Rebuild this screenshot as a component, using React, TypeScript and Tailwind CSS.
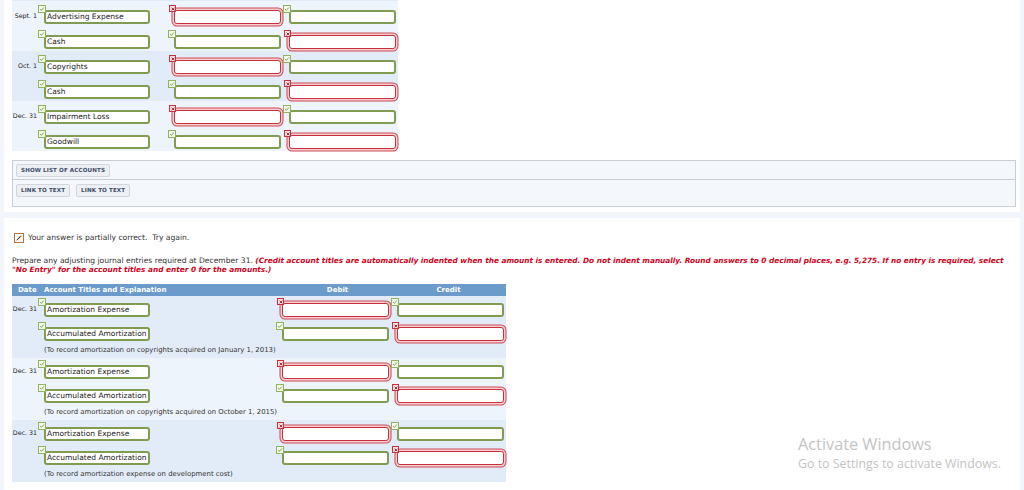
import React from "react"

type Entry = {
  date?: string
  account: string
  debitOk: boolean
  creditOk: boolean
}

type Group = {
  rows: Entry[]
  note?: string
}

const topGroups: Group[] = [
  {
    rows: [
      { date: "Sept. 1", account: "Advertising Expense", debitOk: false, creditOk: true },
      { account: "Cash", debitOk: true, creditOk: false },
    ],
  },
  {
    rows: [
      { date: "Oct. 1", account: "Copyrights", debitOk: false, creditOk: true },
      { account: "Cash", debitOk: true, creditOk: false },
    ],
  },
  {
    rows: [
      { date: "Dec. 31", account: "Impairment Loss", debitOk: false, creditOk: true },
      { account: "Goodwill", debitOk: true, creditOk: false },
    ],
  },
]

const adjustGroups: Group[] = [
  {
    rows: [
      { date: "Dec. 31", account: "Amortization Expense", debitOk: false, creditOk: true },
      { account: "Accumulated Amortization", debitOk: true, creditOk: false },
    ],
    note: "(To record amortization on copyrights acquired on January 1, 2013)",
  },
  {
    rows: [
      { date: "Dec. 31", account: "Amortization Expense", debitOk: false, creditOk: true },
      { account: "Accumulated Amortization", debitOk: true, creditOk: false },
    ],
    note: "(To record amortization on copyrights acquired on October 1, 2015)",
  },
  {
    rows: [
      { date: "Dec. 31", account: "Amortization Expense", debitOk: false, creditOk: true },
      { account: "Accumulated Amortization", debitOk: true, creditOk: false },
    ],
    note: "(To record amortization expense on development cost)",
  },
]

function OkMark() {
  return (
    <span className="absolute -left-[6px] -top-[5px] z-10 flex h-[8px] w-[8px] items-center justify-center border border-[#8fb35e] bg-[#f4f9ec]">
      <svg viewBox="0 0 8 8" className="h-[6px] w-[6px]">
        <path d="M1.5 4.2 L3.2 5.8 L6.5 2" fill="none" stroke="#6f9a3a" strokeWidth="1.2" />
      </svg>
    </span>
  )
}

function BadMark() {
  return (
    <span className="absolute -left-[5px] -top-[5px] z-10 flex h-[7px] w-[7px] items-center justify-center border border-[#c9303b] bg-[#fbe1e3]">
      <svg viewBox="0 0 6 6" className="h-[4px] w-[4px]">
        <path d="M1 1 L5 5 M5 1 L1 5" stroke="#b3202b" strokeWidth="1.4" />
      </svg>
    </span>
  )
}

function Field({ ok, text, width }: { ok: boolean; text?: string; width: string }) {
  return (
    <div className={`relative ${width}`}>
      {ok ? <OkMark /> : <BadMark />}
      <div
        className={
          ok
            ? "flex h-[14px] items-center rounded-[3px] border-2 border-[#7f9c52] bg-white px-[1px]"
            : "flex h-[14px] items-center rounded-[3px] border-[1.5px] border-[#c4303b] bg-white px-[1px] shadow-[0_0_0_1.5px_#f6cdd0,0_0_0_2.5px_#cd4954]"
        }
      >
        {text && <span className="whitespace-nowrap text-[7.5px] leading-none text-[#222]">{text}</span>}
      </div>
    </div>
  )
}

function EntryRow({ entry, debitX, creditX }: { entry: Entry; debitX: string; creditX: string }) {
  return (
    <div className="flex items-start">
      <div className="w-[32px] pr-[7px] pt-[3px] text-right text-[6.3px] leading-none whitespace-nowrap text-[#222]">
        {entry.date ?? ""}
      </div>
      <Field ok text={entry.account} width="w-[106px]" />
      <div className={debitX}>
        <Field ok={entry.debitOk} width="w-[107px]" />
      </div>
      <div className={creditX}>
        <Field ok={entry.creditOk} width="w-[107px]" />
      </div>
    </div>
  )
}

function Button({ label }: { label: string }) {
  return (
    <span className="flex h-[13px] items-center rounded-[2px] border border-[#d2d6dd] bg-[#eceff3] px-[4px] text-[5.6px] font-bold uppercase tracking-[0.1px] text-[#3f4d68]">
      {label}
    </span>
  )
}

export default function App() {
  return (
    <div className="relative h-[490px] w-[1024px] overflow-hidden bg-[#f2f5f9] px-[4px] font-['DejaVu_Sans',Verdana,sans-serif]">
      {/* Previous entries */}
      <div className="h-[212px] bg-white pl-[8px] pr-[4px]">
        <div className="w-[386px]">
          <div className="h-[1px] bg-[#e1ebf8]" />
          {topGroups.map((g, gi) => (
            <div key={gi} className={gi % 2 === 1 ? "bg-[#e2ecf9]" : "bg-[#eef4fc]"}>
              {g.rows.map((r, ri) => (
                <div key={ri} className="h-[25px] pt-[9px]">
                  <EntryRow entry={r} debitX="ml-[24px]" creditX="ml-[8px]" />
                </div>
              ))}
            </div>
          ))}
        </div>

        <div className="mt-[9px] border border-[#c9ced6] bg-[#f4f7fb]">
          <div className="flex border-b border-[#c9ced6] px-[3px] pb-[2px] pt-[3px]">
            <Button label="Show List of Accounts" />
          </div>
          <div className="flex gap-[6px] px-[3px] pb-[9px] pt-[4px]">
            <Button label="Link to Text" />
            <Button label="Link to Text" />
          </div>
        </div>
      </div>

      {/* Adjusting entries */}
      <div className="mt-[6px] h-[300px] bg-white pl-[8px] pr-[4px] pt-[15px]">
        <div className="flex h-[10px] items-center gap-[4px] pl-[2px]">
          <span className="flex h-[10px] w-[10px] items-center justify-center border border-[#b8733d] bg-white">
            <svg viewBox="0 0 10 10" className="h-[8px] w-[8px]">
              <path d="M2.5 7.5 L7 3" stroke="#5a2a10" strokeWidth="1.3" />
              <path d="M7 3 L7.8 2.2" stroke="#d0342c" strokeWidth="1.5" />
              <path d="M2 8 L2.6 7.4" stroke="#d0342c" strokeWidth="1" />
            </svg>
          </span>
          <span className="text-[7.6px] leading-none text-[#333]">Your answer is partially correct.&nbsp; Try again.</span>
        </div>

        <p className="mt-[13px] whitespace-nowrap text-[7.6px] leading-[9px] text-[#333]">
          Prepare any adjusting journal entries required at December 31.{" "}
          <span className="text-[7.35px] font-bold italic text-[#d0021b]">
            (Credit account titles are automatically indented when the amount is entered. Do not indent manually. Round
            answers to 0 decimal places, e.g. 5,275. If no entry is required, select
            <br />
            "No Entry" for the account titles and enter 0 for the amounts.)
          </span>
        </p>

        <div className="mt-[10px] w-[494px]">
          <div className="flex h-[12px] items-center bg-[#6a9bcb] text-[7px] font-bold leading-none text-white">
            <span className="w-[32px] pl-[6px]">Date</span>
            <span className="w-[236px]">Account Titles and Explanation</span>
            <span className="w-[115px] text-center">Debit</span>
            <span className="w-[107px] text-center">Credit</span>
          </div>
          {adjustGroups.map((g, gi) => (
            <div key={gi} className={gi % 2 === 1 ? "bg-[#eef4fc]" : "bg-[#e2ecf9]"}>
              {g.rows.map((r, ri) => (
                <div key={ri} className="h-[24px] pt-[7px]">
                  <EntryRow entry={r} debitX="ml-[132px]" creditX="ml-[8px]" />
                </div>
              ))}
              <div className="flex h-[14px] items-center pl-[32px] pb-[2px] text-[6.9px] leading-none text-[#333]">
                {g.note}
              </div>
            </div>
          ))}
        </div>
      </div>

      {/* Windows watermark */}
      <div className="pointer-events-none absolute left-[798px] top-[434px] font-['Open_Sans',sans-serif] text-[#c4c4c4]">
        <div className="text-[16.3px] leading-[21px]">Activate Windows</div>
        <div className="text-[12.4px] leading-[17px]">Go to Settings to activate Windows.</div>
      </div>
    </div>
  )
}
